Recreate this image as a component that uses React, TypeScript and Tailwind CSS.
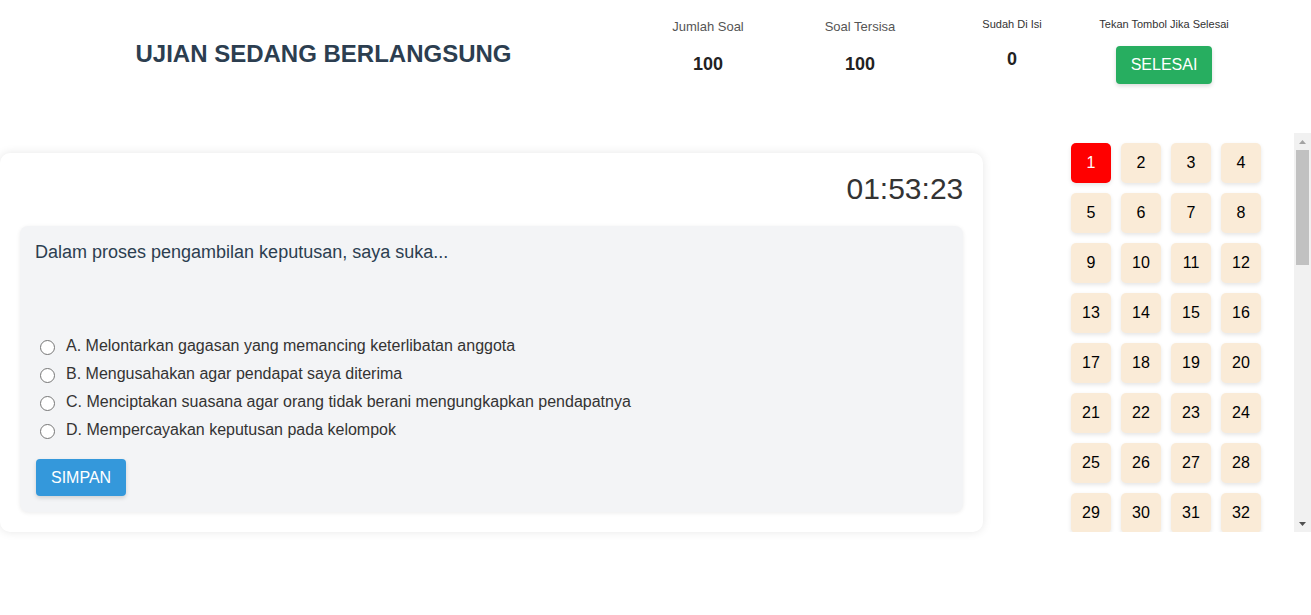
import React from "react";

const stats = [
  { label: "Jumlah Soal", value: "100", small: false },
  { label: "Soal Tersisa", value: "100", small: false },
  { label: "Sudah Di Isi", value: "0", small: true },
];

const options = [
  "A. Melontarkan gagasan yang memancing keterlibatan anggota",
  "B. Mengusahakan agar pendapat saya diterima",
  "C. Menciptakan suasana agar orang tidak berani mengungkapkan pendapatnya",
  "D. Mempercayakan keputusan pada kelompok",
];

export default function App() {
  const numbers = Array.from({ length: 100 }, (_, i) => i + 1);

  return (
    <div className="w-full h-[615px] bg-white font-['Liberation_Sans',Arial,sans-serif] overflow-hidden">
      {/* header */}
      <div className="flex h-[133px] pt-[18px]">
        <div className="w-[632px] pl-[15px] text-center">
          <h1 className="mt-[22px] text-[24px] leading-[28px] font-bold text-[#2c3e50]">
            UJIAN SEDANG BERLANGSUNG
          </h1>
        </div>
        {stats.map((s) => (
          <div key={s.label} className="w-[152px] flex flex-col items-center">
            <div
              className={
                s.small
                  ? "text-[11px] leading-[13px] text-[#333]"
                  : "text-[13px] leading-[15px] mt-[1px] text-[#555]"
              }
            >
              {s.label}
            </div>
            <div
              className={
                s.small
                  ? "mt-[18px] text-[18px] leading-[21px] font-bold text-[#222]"
                  : "mt-[20px] text-[18px] leading-[21px] font-bold text-[#222]"
              }
            >
              {s.value}
            </div>
          </div>
        ))}
        <div className="w-[152px] flex flex-col items-center">
          <div className="text-[11px] leading-[13px] text-[#333]">Tekan Tombol Jika Selesai</div>
          <button className="mt-[15px] h-[38px] px-[15px] rounded-[4px] bg-[#27ae60] text-white text-[16px] shadow-[0_2px_4px_rgba(0,0,0,0.15)]">
            SELESAI
          </button>
        </div>
      </div>

      {/* main */}
      <div className="flex">
        <div className="w-[75%] mt-[20px]">
          <div className="bg-white rounded-[10px] p-[20px] shadow-[0_0_10px_rgba(0,0,0,0.1)]">
            <div className="text-right text-[30px] leading-[32px] text-[#333]">01:53:23</div>
            <div className="mt-[21px] bg-[#f3f4f6] rounded-[8px] px-[16px] pt-[16px] pb-[16px] shadow-[0_1px_4px_rgba(0,0,0,0.08)]">
              <p className="-ml-[1px] text-[18px] leading-[21px] text-[#2c3e50]">
                Dalam proses pengambilan keputusan, saya suka...
              </p>
              <div className="mt-[69px] flex flex-col">
                {options.map((o) => (
                  <label key={o} className="flex items-center h-[28px] text-[16px] text-[#333]">
                    <span className="ml-[4px] mr-[11px] mt-[3px] w-[15px] h-[15px] rounded-full border border-[#767676] bg-white shrink-0" />
                    {o}
                  </label>
                ))}
              </div>
              <button className="mt-[15px] h-[37px] px-[15px] rounded-[4px] bg-[#3498db] text-white text-[16px] shadow-[0_2px_4px_rgba(0,0,0,0.15)]">
                SIMPAN
              </button>
            </div>
          </div>
        </div>

        <div className="w-[25%] flex justify-end">
          <div className="flex h-[399px]">
            <div className="w-[233px] h-full overflow-hidden pl-[10px] pt-[10px]">
              <div className="grid grid-cols-[repeat(4,40px)] gap-[10px]">
                {numbers.map((n) => (
                  <button
                    key={n}
                    className={
                      n === 1
                        ? "w-[40px] h-[40px] rounded-[5px] bg-[#ff0000] text-white text-[16px] shadow-[0_2px_4px_rgba(0,0,0,0.1)]"
                        : "w-[40px] h-[40px] rounded-[5px] bg-[#faebd7] text-black text-[16px] shadow-[0_2px_4px_rgba(0,0,0,0.1)]"
                    }
                  >
                    {n}
                  </button>
                ))}
              </div>
            </div>
            {/* scrollbar */}
            <div className="w-[17px] h-full bg-[#f1f1f1] flex flex-col">
              <div className="h-[17px] flex items-center justify-center">
                <svg width="7" height="4" viewBox="0 0 7 4">
                  <polygon points="3.5,0 7,4 0,4" fill="#a3a3a3" />
                </svg>
              </div>
              <div className="mx-[2px] h-[115px] bg-[#c1c1c1]" />
              <div className="flex-1" />
              <div className="h-[17px] flex items-center justify-center">
                <svg width="7" height="4" viewBox="0 0 7 4">
                  <polygon points="0,0 7,0 3.5,4" fill="#505050" />
                </svg>
              </div>
            </div>
          </div>
        </div>
      </div>
    </div>
  );
}
